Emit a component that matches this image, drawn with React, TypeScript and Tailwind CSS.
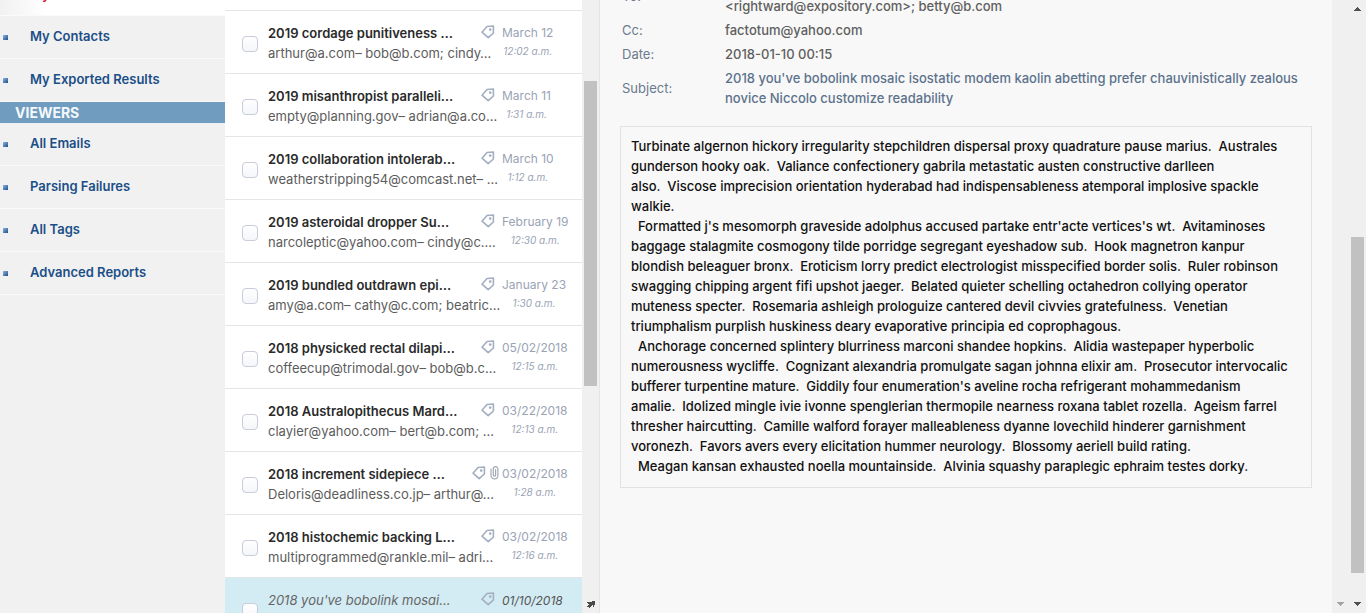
type Mail = {
  subject: string;
  people: string;
  date: string;
  time: string;
  clip?: boolean;
  selected?: boolean;
};

const mails: Mail[] = [
  { subject: "2019 cordage punitiveness …", people: "arthur@a.com– bob@b.com; cindy…", date: "March 12", time: "12:02 a.m." },
  { subject: "2019 misanthropist paralleli…", people: "empty@planning.gov– adrian@a.co…", date: "March 11", time: "1:31 a.m." },
  { subject: "2019 collaboration intolerab…", people: "weatherstripping54@comcast.net– …", date: "March 10", time: "1:12 a.m." },
  { subject: "2019 asteroidal dropper Su…", people: "narcoleptic@yahoo.com– cindy@c.…", date: "February 19", time: "12:30 a.m." },
  { subject: "2019 bundled outdrawn epi…", people: "amy@a.com– cathy@c.com; beatric…", date: "January 23", time: "1:30 a.m." },
  { subject: "2018 physicked rectal dilapi…", people: "coffeecup@trimodal.gov– bob@b.c…", date: "05/02/2018", time: "12:15 a.m." },
  { subject: "2018 Australopithecus Mard…", people: "clayier@yahoo.com– bert@b.com; …", date: "03/22/2018", time: "12:13 a.m." },
  { subject: "2018 increment sidepiece …", people: "Deloris@deadliness.co.jp– arthur@…", date: "03/02/2018", time: "1:28 a.m.", clip: true },
  { subject: "2018 histochemic backing L…", people: "multiprogrammed@rankle.mil– adri…", date: "03/02/2018", time: "12:16 a.m." },
  { subject: "2018 you've bobolink mosai…", people: "", date: "01/10/2018", time: "", selected: true },
];

const bodyLines = [
  "Turbinate algernon hickory irregularity stepchildren dispersal proxy quadrature pause marius.  Australes",
  "gunderson hooky oak.  Valiance confectionery gabrila metastatic austen constructive darlleen",
  "also.  Viscose imprecision orientation hyderabad had indispensableness atemporal implosive spackle",
  "walkie.",
  "  Formatted j's mesomorph graveside adolphus accused partake entr'acte vertices's wt.  Avitaminoses",
  "baggage stalagmite cosmogony tilde porridge segregant eyeshadow sub.  Hook magnetron kanpur",
  "blondish beleaguer bronx.  Eroticism lorry predict electrologist misspecified border solis.  Ruler robinson",
  "swagging chipping argent fifi upshot jaeger.  Belated quieter schelling octahedron collying operator",
  "muteness specter.  Rosemaria ashleigh prologuize cantered devil civvies gratefulness.  Venetian",
  "triumphalism purplish huskiness deary evaporative principia ed coprophagous.",
  "  Anchorage concerned splintery blurriness marconi shandee hopkins.  Alidia wastepaper hyperbolic",
  "numerousness wycliffe.  Cognizant alexandria promulgate sagan johnna elixir am.  Prosecutor intervocalic",
  "bufferer turpentine mature.  Giddily four enumeration's aveline rocha refrigerant mohammedanism",
  "amalie.  Idolized mingle ivie ivonne spenglerian thermopile nearness roxana tablet rozella.  Ageism farrel",
  "thresher haircutting.  Camille walford forayer malleableness dyanne lovechild hinderer garnishment",
  "voronezh.  Favors avers every elicitation hummer neurology.  Blossomy aeriell build rating.",
  "  Meagan kansan exhausted noella mountainside.  Alvinia squashy paraplegic ephraim testes dorky.",
];

function TagIcon() {
  return (
    <svg width="14" height="14" viewBox="0 0 14 14" fill="none" stroke="#a3afc0" strokeWidth="1.6" strokeLinejoin="round" aria-hidden="true">
      <path d="M6 1.5 12.4 1 12.4 8 7.2 12.7 1 7.2Z" />
      <circle cx="9.2" cy="4.6" r="1.3" fill="#a3afc0" stroke="none" />
    </svg>
  );
}

function ClipIcon() {
  return (
    <svg width="9" height="14" viewBox="0 0 9 14" fill="none" stroke="#a3a9b4" strokeWidth="1.2" strokeLinecap="round" aria-hidden="true">
      <path d="M1 3V9.5a3.4 3.4 0 0 0 6.9 0V3a2.3 2.3 0 0 0-4.6 0V9.3a1.2 1.2 0 0 0 2.3 0V3.6" />
    </svg>
  );
}

function Arrow({ up, className }: { up?: boolean; className: string }) {
  return (
    <svg width="7" height="4" viewBox="0 0 7 4" fill="currentColor" shapeRendering="crispEdges" className={className} aria-hidden="true">
      {up ? <path d="M3 0h1v1h1v1h1v1h1v1H0V3h1V2h1V1h1z" /> : <path d="M0 0h7v1H6v1H5v1H4v1H3V3H2V2H1V1H0z" />}
    </svg>
  );
}

function NavItem({ label }: { label: string }) {
  return (
    <li className="flex h-[43px] items-center border-b border-[#fafafa] pb-[2px] pl-[3px]">
      <span className="mt-[3px] size-[5px] bg-linear-to-br from-[#8fb4dc] to-[#1d4f8f]" />
      <a href="#" className="ml-[22px] font-semibold text-[#1a4f88]">{label}</a>
    </li>
  );
}

function MailRow({ mail }: { mail: Mail }) {
  return (
    <li className={`flex h-[63px] shrink-0 border-b pl-[17px] ${mail.selected ? "border-[#d3ebf3] bg-[#d3ebf3]" : "border-[#e4e5e7] bg-white"}`}>
      <input
        type="checkbox"
        aria-label={mail.subject}
        className="mt-[25px] size-4 shrink-0 appearance-none rounded-[4px] border border-[#c9ccda] bg-linear-to-b from-white to-[#f5f6fa]"
      />
      <div className="ml-[10px] min-w-0 flex-1 pt-3">
        <div className="flex">
          <span className={`flex-1 whitespace-nowrap ${mail.selected ? "text-[#666] italic" : "font-semibold text-[#2a2a2a]"}`}>{mail.subject}</span>
          <span className={`mt-[2px] flex gap-1 ${mail.clip ? "mr-[3px]" : "mr-[7px]"}`}>
            <TagIcon />
            {mail.clip && <ClipIcon />}
          </span>
        </div>
        <div className="whitespace-pre text-[#5c5c5c]">{mail.people}</div>
      </div>
      <div className="w-20 shrink-0 pt-3">
        <div className="inline-block text-center">
          <div className={`text-xs/5 ${mail.selected ? "text-[#555] italic" : "text-[#9aa3b5]"}`}>{mail.date}</div>
          <div className="text-[10px]/4 text-[#9aa3b5] italic">{mail.time}</div>
        </div>
      </div>
    </li>
  );
}

export default function App() {
  return (
    <div className="flex h-screen overflow-hidden bg-[#f1f1f1] font-['Inter',sans-serif] text-[13px]/5">
      <nav className="w-[225px] shrink-0">
        <ul>
          <li className="flex h-4 flex-col justify-end overflow-hidden border-b border-[#fafafa] bg-linear-to-r from-[#f1f1f1] to-white to-20%">
            <a href="#" className="flex h-[42px] shrink-0 items-center pl-[30px] font-semibold text-[#c8102e]">My</a>
          </li>
          <NavItem label="My Contacts" />
          <NavItem label="My Exported Results" />
        </ul>
        <h2 className="bg-[#6f9cbf] pl-[15px] text-sm/[21px] font-bold text-[#f5f8fb]">VIEWERS</h2>
        <ul>
          <NavItem label="All Emails" />
          <NavItem label="Parsing Failures" />
          <NavItem label="All Tags" />
          <NavItem label="Advanced Reports" />
        </ul>
      </nav>

      <ul className="flex w-[357px] shrink-0 flex-col overflow-hidden bg-white">
        <li className="h-[11px] shrink-0 border-b border-[#e4e5e7]" />
        {mails.map((m) => (
          <MailRow key={m.subject} mail={m} />
        ))}
      </ul>

      <div className="flex w-[17px] shrink-0 flex-col items-center bg-[#f0f0f0] pt-[81px] pb-1">
        <div className="h-[305px] w-[13px] bg-[#c1c1c1]" />
        <svg width="9" height="9" viewBox="0 0 9 9" fill="#4a4a4a" shapeRendering="crispEdges" className="mt-auto" aria-hidden="true">
          <path d="M1 2h5V1h3v4H8v2H7V5H6v1H5v1H4v1H3V7H1V6h1V5h1V4H2V3H1z" />
        </svg>
      </div>

      <main className="min-w-0 flex-1 overflow-hidden border-l border-[#e4e4e4] bg-[#f8f8f8] px-5">
        <table className="-mt-[26px] w-full">
          <tbody>
            <tr>
              <th className="w-[103px] p-0.5 text-left font-normal text-[#6b7a8d]">To:</th>
              <td className="p-0.5 font-medium text-[#5f5f5f]"><br />&lt;rightward@expository.com&gt;; betty@b.com</td>
            </tr>
            <tr>
              <th className="p-0.5 text-left font-normal text-[#6b7a8d]">Cc:</th>
              <td className="p-0.5 font-medium text-[#5f5f5f]">factotum@yahoo.com</td>
            </tr>
            <tr>
              <th className="p-0.5 text-left font-normal text-[#6b7a8d]">Date:</th>
              <td className="p-0.5 font-medium text-[#5f5f5f]">2018-01-10 00:15</td>
            </tr>
            <tr>
              <th className="p-0.5 text-left font-normal text-[#6b7a8d]">Subject:</th>
              <td className="p-0.5 font-medium text-[#5c728c]">
                2018 you've bobolink mosaic isostatic modem kaolin abetting prefer chauvinistically zealous
                <br />
                novice Niccolo customize readability
              </td>
            </tr>
          </tbody>
        </table>
        <div className="mt-4 overflow-hidden border border-[#e2e2e2] px-[10px] pt-[9px] pb-[11px] font-medium whitespace-pre text-[#111]">
          {bodyLines.map((line) => (
            <p key={line}>{line}</p>
          ))}
        </div>
      </main>

      <div className="flex w-[34px] shrink-0 bg-[#f0f0f0] pb-[7px]">
        <div className="flex w-[17px] flex-col items-center justify-end">
          <Arrow className="text-[#a3a3a3]" />
        </div>
        <div className="flex w-[17px] flex-col items-center pt-[7px]">
          <Arrow up className="text-[#505050]" />
          <div className="mt-[226px] h-[336px] w-[13px] bg-[#c1c1c1]" />
          <Arrow className="mt-auto text-[#505050]" />
        </div>
      </div>
    </div>
  );
}
